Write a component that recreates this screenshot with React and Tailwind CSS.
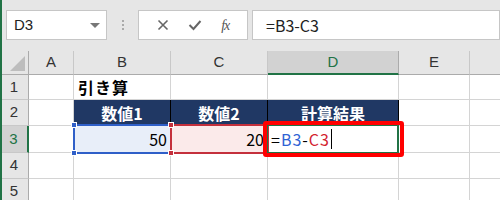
import React from 'react';

const cols = [
  { key: 'A', w: 'w-[45px]' },
  { key: 'B', w: 'w-[97px]' },
  { key: 'C', w: 'w-[97px]' },
  { key: 'D', w: 'w-[131px]' },
  { key: 'E', w: 'w-[71px]' },
  { key: 'F', w: 'w-[40px]' },
];

const rowH = ['h-[25px]', 'h-[26px]', 'h-[27px]', 'h-[26px]', 'h-[26px]'];

const Cell = ({ w, className = '', children }) => (
  <div className={`${w} shrink-0 border-r border-b border-[#d4d4d4] flex items-center ${className}`}>{children}</div>
);

const Handle = ({ className }) => (
  <div className={`absolute w-[6px] h-[6px] border border-white ${className}`} />
);

export default function App() {
  const body = (r, c) => {
    if (r === 1 && c === 'B') return <span className="pl-[4px] font-bold text-[16px] tracking-[1px] text-black">引き算</span>;
    if (r === 2 && ['B', 'C', 'D'].includes(c)) {
      const t = { B: '数値1', C: '数値2', D: '計算結果' }[c];
      return <span className="w-full text-center font-bold text-[16px] text-white">{t}</span>;
    }
    if (r === 3 && c === 'B') return <span className="w-full text-right pr-[3px] text-[16px] text-black">50</span>;
    if (r === 3 && c === 'C') return <span className="w-full text-right pr-[3px] text-[16px] text-black">20</span>;
    if (r === 3 && c === 'D')
      return (
        <span className="pl-[3px] text-[16px] tracking-[1px] flex items-center">
          <span className="text-black">=</span>
          <span className="text-[#2f63d4]">B3</span>
          <span className="text-black">-</span>
          <span className="text-[#d3232f]">C3</span>
          <span className="ml-[1px] w-[1px] h-[20px] bg-black" />
        </span>
      );
    return null;
  };

  const cellBg = (r, c) => {
    if (r === 2 && ['B', 'C', 'D'].includes(c)) return 'bg-[#203864] !border-black';
    if (r === 3 && c === 'B') return 'bg-[#e8eef9]';
    if (r === 3 && c === 'C') return 'bg-[#fbeaea]';
    return 'bg-white';
  };

  return (
    <div className="relative w-[500px] h-[200px] overflow-hidden bg-white font-['Noto_Sans_CJK_JP','Noto_Sans',sans-serif]">
      {/* formula bar */}
      <div className="h-[51px] bg-[#e6e6e6] flex items-start pt-[10px] pl-[6px]">
        <div className="w-[101px] h-[30px] border border-[#c6c6c6] bg-white flex items-center justify-between pl-[7px] pr-[6px]">
          <span className="text-[15px] text-[#222] font-['Liberation_Sans',sans-serif]">D3</span>
          <span className="w-0 h-0 border-l-[5px] border-r-[5px] border-t-[5px] border-l-transparent border-r-transparent border-t-[#777]" />
        </div>
        <div className="w-[31px] h-[30px] flex flex-col items-center justify-center gap-[2px]">
          <span className="w-[2px] h-[2px] bg-[#aaa]" />
          <span className="w-[2px] h-[2px] bg-[#aaa]" />
          <span className="w-[2px] h-[2px] bg-[#aaa]" />
        </div>
        <div className="w-[110px] h-[30px] border border-[#c6c6c6] bg-white flex items-center justify-around px-[8px]">
          <svg width="12" height="12" viewBox="0 0 12 12">
            <path d="M1.5 1.5 L10.5 10.5 M10.5 1.5 L1.5 10.5" stroke="#666" strokeWidth="1.6" />
          </svg>
          <svg width="14" height="12" viewBox="0 0 14 12">
            <path d="M1.5 6 L5.5 10 L12.5 2" stroke="#666" strokeWidth="2" fill="none" />
          </svg>
          <span className="text-[14px] italic text-[#555] font-['Liberation_Serif',serif] tracking-[-1px]">fx</span>
        </div>
        <div className="ml-[4px] flex-1 h-[30px] border border-[#c6c6c6] bg-white flex items-center pl-[13px]">
          <span className="text-[16px] text-[#222]">=B3-C3</span>
        </div>
      </div>

      {/* sheet */}
      <div className="relative">
        <div className="flex h-[24px]">
          <div className="relative w-[29px] shrink-0 bg-[#e6e6e6] border-r border-b border-[#ababab]">
            <svg className="absolute right-[3px] bottom-[3px]" width="15" height="15" viewBox="0 0 15 15">
              <path d="M15 0 L15 15 L0 15 Z" fill="#bdbdbd" />
            </svg>
          </div>
          {cols.map(({ key, w }) => (
            <div
              key={key}
              className={`${w} shrink-0 flex items-center justify-center text-[15px] font-['Liberation_Sans',sans-serif] border-r ${
                key === 'D'
                  ? 'bg-[#d2d2d2] border-b-2 border-b-[#217346] border-r-[#ababab] text-[#217346]'
                  : 'bg-[#e6e6e6] border-b border-[#ababab] border-r-[#c8c8c8] text-[#333]'
              }`}
            >
              {key !== 'F' && key}
            </div>
          ))}
        </div>
        {[1, 2, 3, 4, 5].map((r) => (
          <div key={r} className={`flex ${rowH[r - 1]}`}>
            <div
              className={`w-[29px] shrink-0 flex items-center justify-center text-[15px] font-['Liberation_Sans',sans-serif] border-b ${
                r === 3
                  ? 'bg-[#d2d2d2] border-r-2 border-r-[#217346] border-b-[#c8c8c8] text-[#217346]'
                  : 'bg-[#e6e6e6] border-r border-r-[#ababab] border-b-[#c8c8c8] text-[#333]'
              }`}
            >
              {r}
            </div>
            {cols.map(({ key, w }) => (
              <Cell key={key} w={w} className={cellBg(r, key)}>
                {body(r, key)}
              </Cell>
            ))}
          </div>
        ))}

        {/* B3 range border */}
        <div className="absolute left-[73px] top-[73px] w-[99px] h-[30px] border-2 border-[#2f5fc8] pointer-events-none">
          <Handle className="bg-[#2f5fc8] -left-[4px] -top-[4px]" />
          <Handle className="bg-[#2f5fc8] -left-[4px] -bottom-[4px]" />
        </div>
        {/* C3 range border */}
        <div className="absolute left-[170px] top-[73px] w-[99px] h-[30px] border-2 border-[#c4303c] pointer-events-none">
          <Handle className="bg-[#c4303c] -left-[4px] -top-[4px]" />
          <Handle className="bg-[#c4303c] -left-[4px] -bottom-[4px]" />
        </div>
        {/* D3 active cell */}
        <div className="absolute left-[266px] top-[73px] w-[133px] h-[30px] border-2 border-[#217346] pointer-events-none" />
        {/* red highlight */}
        <div className="absolute left-[263px] top-[70px] w-[141px] h-[36px] border-[4px] border-[#ff0000] rounded-[3px] pointer-events-none" />
      </div>

      <div className="absolute left-0 top-0 w-[2px] h-[200px] bg-[#217346]" />
    </div>
  );
}
